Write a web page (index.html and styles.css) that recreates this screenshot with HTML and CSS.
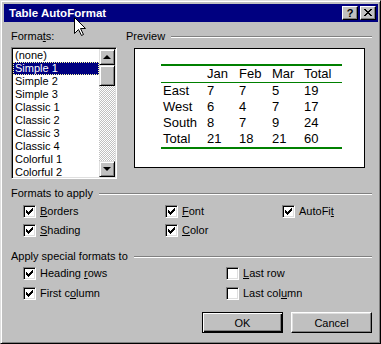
FILE: index.html
```html
<!DOCTYPE html>
<html lang="en">
<head>
    <meta charset="UTF-8">
    <title>Table AutoFormat</title>
    <link rel="stylesheet" href="styles.css">
</head>
<body>

    <div class="window">
        <!-- Title bar -->
        <div class="titlebar">
            <span class="title">Table AutoFormat</span>
            <div class="title-buttons">
                <div class="tbtn help">?</div>
                <div class="tbtn close">
                    <svg width="8" height="7" viewBox="0 0 8 7"><path d="M0 0h2v1h-2z M6 0h2v1h-2z M1 1h2v1h-2z M5 1h2v1h-2z M2 2h4v1h-4z M3 3h2v1h-2z M2 4h4v1h-4z M1 5h2v1h-2z M5 5h2v1h-2z M0 6h2v1h-2z M6 6h2v1h-2z" fill="#000"/></svg>
                </div>
            </div>
        </div>

        <div class="content">
            <div class="top">
                <!-- Formats list -->
                <div class="formats">
                    <div class="label">Forma<u>t</u>s:</div>
                    <div class="listbox">
                        <div class="items">
                            <div class="item">(none)</div>
                            <div class="item selected">Simple 1</div>
                            <div class="item">Simple 2</div>
                            <div class="item">Simple 3</div>
                            <div class="item">Classic 1</div>
                            <div class="item">Classic 2</div>
                            <div class="item">Classic 3</div>
                            <div class="item">Classic 4</div>
                            <div class="item">Colorful 1</div>
                            <div class="item">Colorful 2</div>
                        </div>
                        <div class="scrollbar">
                            <div class="sbtn"><span class="arrow-up"></span></div>
                            <div class="thumb"></div>
                            <div class="track"></div>
                            <div class="sbtn"><span class="arrow-down"></span></div>
                        </div>
                    </div>
                </div>

                <!-- Preview -->
                <div class="preview-group">
                    <div class="group-head"><span>Preview</span><span class="rule"></span></div>
                    <div class="preview-box">
                        <table class="sample">
                            <tr class="head"><td></td><td>Jan</td><td>Feb</td><td>Mar</td><td>Total</td></tr>
                            <tr><td>East</td><td>7</td><td>7</td><td>5</td><td>19</td></tr>
                            <tr><td>West</td><td>6</td><td>4</td><td>7</td><td>17</td></tr>
                            <tr><td>South</td><td>8</td><td>7</td><td>9</td><td>24</td></tr>
                            <tr><td>Total</td><td>21</td><td>18</td><td>21</td><td>60</td></tr>
                        </table>
                    </div>
                </div>
            </div>

            <!-- Formats to apply -->
            <div class="section apply">
                <div class="group-head"><span>Formats to apply</span><span class="rule"></span></div>
                <div class="checks three">
                    <div class="check"><span class="box on"></span><span><u>B</u>orders</span></div>
                    <div class="check"><span class="box on"></span><span><u>F</u>ont</span></div>
                    <div class="check"><span class="box on"></span><span>AutoFi<u>t</u></span></div>
                    <div class="check"><span class="box on"></span><span><u>S</u>hading</span></div>
                    <div class="check"><span class="box on"></span><span><u>C</u>olor</span></div>
                </div>
            </div>

            <!-- Apply special formats to -->
            <div class="section special">
                <div class="group-head"><span>Apply special formats to</span><span class="rule"></span></div>
                <div class="checks two">
                    <div class="check"><span class="box on"></span><span>Heading <u>r</u>ows</span></div>
                    <div class="check"><span class="box"></span><span><u>L</u>ast row</span></div>
                    <div class="check"><span class="box on"></span><span>First c<u>o</u>lumn</span></div>
                    <div class="check"><span class="box"></span><span>Last col<u>u</u>mn</span></div>
                </div>
            </div>

            <!-- Buttons -->
            <div class="buttons">
                <button class="btn default">OK</button>
                <button class="btn">Cancel</button>
            </div>
        </div>

        <!-- Mouse pointer -->
        <svg class="cursor" width="12" height="19" viewBox="0 0 12 19"><path d="M0.5 0.5V16.5L4.5 12.5L7.5 18.5L9.5 17.5L6.5 11.5H11.5Z" fill="#fff" stroke="#000" stroke-width="1"/></svg>
    </div>

</body>
</html>
```

FILE: styles.css
```css
/* General */
body {
    margin: 0;
    font-family: "Liberation Sans", Arial, sans-serif;
    font-size: 11px;
    color: #000;
}

u {
    text-decoration: underline;
    text-underline-offset: 1px;
}

/* Window frame */
.window {
    position: relative;
    width: 381px;
    height: 344px;
    box-sizing: border-box;
    background: #c0c0c0;
    border: 1px solid;
    border-color: #dfdfdf #000 #000 #dfdfdf;
    box-shadow: inset 1px 1px #fff, inset -1px -1px #808080;
    padding: 3px 2px 2px 3px;
}

/* Title bar */
.titlebar {
    height: 18px;
    background: #000080;
    display: flex;
    align-items: center;
    padding: 0 2px 0 5px;
}

.title {
    color: #fff;
    font-weight: bold;
    font-size: 11.5px;
}

.title-buttons {
    margin-left: auto;
    display: flex;
    gap: 2px;
}

.tbtn {
    width: 16px;
    height: 14px;
    box-sizing: border-box;
    background: #c0c0c0;
    border: 1px solid;
    border-color: #fff #000 #000 #fff;
    box-shadow: inset -1px -1px #808080;
    display: flex;
    align-items: center;
    justify-content: center;
    font-weight: bold;
    font-size: 11px;
    line-height: 12px;
}

.close svg {
    display: block;
    margin: 0 1px 1px 0;
}

/* Content */
.content {
    padding: 8px 6px 0 7px;
}

.top {
    display: flex;
    gap: 9px;
}

.label {
    height: 13px;
    line-height: 13px;
}

/* Formats list */
.formats {
    width: 106px;
}

.listbox {
    margin-top: 4px;
    height: 132px;
    box-sizing: border-box;
    border: 1px solid;
    border-color: #808080 #fff #fff #808080;
    box-shadow: inset 1px 1px #000, inset -1px -1px #dfdfdf;
    padding: 1px;
    display: flex;
    background: #fff;
}

.items {
    flex: 1;
    overflow: hidden;
}

.item {
    height: 13px;
    line-height: 13px;
    padding-left: 2px;
    white-space: nowrap;
}

.selected {
    background: #000080;
    color: #fff;
    outline: 1px dotted #ffffa0;
    outline-offset: -1px;
}

.scrollbar {
    width: 16px;
    display: flex;
    flex-direction: column;
}

.sbtn,
.thumb {
    box-sizing: border-box;
    background: #c0c0c0;
    border: 1px solid;
    border-color: #dfdfdf #000 #000 #dfdfdf;
    box-shadow: inset 1px 1px #fff, inset -1px -1px #808080;
}

.sbtn {
    height: 16px;
    display: flex;
    align-items: center;
    justify-content: center;
}

.thumb {
    height: 21px;
}

.track {
    flex: 1;
    background-image: conic-gradient(#fff 25%, #c0c0c0 0 50%, #fff 0 75%, #c0c0c0 0);
    background-size: 2px 2px;
}

.arrow-up,
.arrow-down {
    width: 0;
    height: 0;
    border-left: 4px solid transparent;
    border-right: 4px solid transparent;
}

.arrow-up {
    border-bottom: 4px solid #000;
    margin-bottom: 1px;
}

.arrow-down {
    border-top: 4px solid #000;
}

/* Group headings with etched rule */
.group-head {
    display: flex;
    align-items: center;
    height: 13px;
    line-height: 13px;
    white-space: nowrap;
}

.rule {
    flex: 1;
    height: 0;
    margin-left: 6px;
    border-top: 1px solid #808080;
    border-bottom: 1px solid #fff;
}

/* Preview */
.preview-group {
    flex: 1;
}

.preview-box {
    margin: 5px 7px 0 8px;
    height: 120px;
    box-sizing: border-box;
    border: 1px solid #000;
    background: #fff;
    padding: 15px 0 0 26px;
}

.sample {
    border-collapse: collapse;
    font-size: 13px;
    border-top: 2px solid #008000;
    border-bottom: 2px solid #008000;
}

.sample td {
    padding: 0 0 0 2px;
    height: 16px;
    line-height: 16px;
    text-align: left;
    vertical-align: middle;
}

.sample td:nth-child(1) { width: 42px; }
.sample td:nth-child(2) { width: 30px; }
.sample td:nth-child(3) { width: 31px; }
.sample td:nth-child(4) { width: 30px; }
.sample td:nth-child(5) { width: 38px; }

.sample .head td {
    border-bottom: 1px solid #008000;
}

/* Check boxes */
.section.apply {
    margin-top: 8px;
}

.section.special {
    margin-top: 13px;
}

.checks {
    display: grid;
    padding-left: 12px;
}

.checks.three {
    margin-top: 5px;
    grid-template-columns: 142px 117px auto;
    row-gap: 6px;
}

.checks.two {
    margin-top: 4px;
    grid-template-columns: 203px auto;
    row-gap: 7px;
}

.check {
    display: flex;
    align-items: center;
    gap: 4px;
    height: 13px;
    line-height: 13px;
    white-space: nowrap;
}

.box {
    width: 13px;
    height: 13px;
    box-sizing: border-box;
    flex: none;
    background: #fff;
    border: 1px solid;
    border-color: #808080 #fff #fff #808080;
    box-shadow: inset 1px 1px #000, inset -1px -1px #dfdfdf;
}

.box.on {
    background: #fff url("data:image/svg+xml,%3Csvg xmlns='http://www.w3.org/2000/svg' width='7' height='7' viewBox='0 0 7 7' shape-rendering='crispEdges'%3E%3Cpath d='M0 2H1V3H2V4H3V3H4V2H5V1H6V0H7V3H6V4H5V5H4V6H3V7H2V6H1V5H0Z' fill='%23000'/%3E%3C/svg%3E") no-repeat 2px 2px;
}

/* Buttons */
.buttons {
    display: flex;
    justify-content: flex-end;
    gap: 8px;
    margin-top: 12px;
}

.btn {
    width: 81px;
    height: 21px;
    box-sizing: border-box;
    margin: 0;
    padding: 0;
    font-family: "Liberation Sans", Arial, sans-serif;
    font-size: 11px;
    color: #000;
    background: #c0c0c0;
    border: 1px solid;
    border-color: #fff #000 #000 #fff;
    box-shadow: inset -1px -1px #808080, inset 1px 1px #dfdfdf;
}

.btn.default {
    border: 1px solid #000;
    box-shadow: inset 1px 1px #fff, inset -1px -1px #000, inset -2px -2px #808080;
}

/* Pointer over the title bar */
.cursor {
    position: absolute;
    left: 73px;
    top: 16px;
}
```
